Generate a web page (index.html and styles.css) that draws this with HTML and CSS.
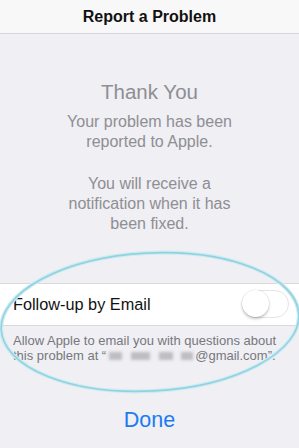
FILE: index.html
```html
<!DOCTYPE html>
<html lang="en">
<head>
<meta charset="utf-8">
<title>Report a Problem</title>
<link rel="stylesheet" href="styles.css">
</head>
<body>
<div class="screen">
  <header class="navbar">
    <h1 class="nav-title">Report a Problem</h1>
  </header>
  <main class="content">
    <h2 class="thanks">Thank You</h2>
    <p class="msg">Your problem has been<br>reported to Apple.</p>
    <p class="msg msg-second">You will receive a<br>notification when it has<br>been fixed.</p>

    <div class="cell">
      <span class="cell-label">Follow-up by Email</span>
      <span class="switch"><span class="knob"></span></span>
    </div>
    <p class="footnote">Allow Apple to email you with questions about<br>this problem at “<span class="redact r1"></span><span class="redact r2"></span><span class="redact r3"></span><span class="redact r4"></span>@gmail.com”.</p>

    <div class="done-wrap"><span class="done">Done</span></div>
  </main>
  <svg class="annotation" width="299" height="448" viewBox="0 0 299 448" aria-hidden="true">
    <ellipse cx="150" cy="322" rx="149" ry="69" transform="rotate(-3 150 322)" fill="none" stroke="#cdecf2" stroke-width="4"/>
    <ellipse cx="150" cy="322" rx="149" ry="69" transform="rotate(-3 150 322)" fill="none" stroke="#92d2e0" stroke-width="1.6"/>
  </svg>
</div>
</body>
</html>
```
FILE: styles.css
```css
html, body {
  margin: 0;
  padding: 0;
}
body {
  background: #efeff4;
  font-family: "Liberation Sans", Arial, sans-serif;
}
.screen {
  position: relative;
  width: 299px;
  height: 448px;
  overflow: hidden;
  background: #efeff4;
}
.navbar {
  height: 33px;
  background: #f8f8f8;
  border-bottom: 1px solid #d6d6da;
  display: flex;
  align-items: center;
  justify-content: center;
}
.nav-title {
  margin: 0;
  font-size: 16px;
  font-weight: bold;
  color: #111;
  line-height: 20px;
  padding-top: 1px;
}
.content {
  display: flex;
  flex-direction: column;
}
.thanks {
  margin: 46px 0 0;
  text-align: center;
  font-size: 20.5px;
  font-weight: normal;
  line-height: 24px;
  color: #8e8e93;
}
.msg {
  margin: 8px 0 0;
  text-align: center;
  font-size: 16px;
  line-height: 19.7px;
  color: #8e8e93;
}
.msg-second {
  margin-top: 23px;
}
.cell {
  margin-top: 49px;
  height: 41px;
  background: #fff;
  border-top: 1px solid #d9d9dd;
  border-bottom: 1px solid #d9d9dd;
  display: flex;
  align-items: center;
  justify-content: space-between;
  padding: 0 10px 0 13px;
}
.cell-label {
  font-size: 16.3px;
  color: #111;
}
.switch {
  position: relative;
  box-sizing: border-box;
  width: 47px;
  height: 28px;
  border-radius: 14px;
  border: 1.5px solid #e4e4e8;
  background: #fff;
}
.knob {
  position: absolute;
  left: -1px;
  top: -1px;
  width: 27px;
  height: 27px;
  border-radius: 50%;
  background: #fff;
  box-shadow: 0 2px 3px rgba(0,0,0,0.22), 0 0 0 0.5px rgba(0,0,0,0.08);
}
.footnote {
  margin: 7px 0 0;
  padding: 0 13px;
  font-size: 13px;
  line-height: 15.5px;
  color: #77777c;
}
.redact {
  display: inline-block;
  height: 8px;
  background: #bdbdc3;
  filter: blur(1.4px);
  vertical-align: 0;
}
.r1 { width: 13px; margin-left: 3px; }
.r2 { width: 19px; margin-left: 9px; }
.r3 { width: 14px; margin-left: 9px; }
.r4 { width: 12px; margin-left: 8px; margin-right: 2px; }
.done-wrap {
  margin-top: 44px;
  display: flex;
  justify-content: center;
}
.done {
  font-size: 21.5px;
  line-height: 25px;
  color: #1b7cf2;
}
.annotation {
  position: absolute;
  left: 0;
  top: 0;
  pointer-events: none;
}
```
